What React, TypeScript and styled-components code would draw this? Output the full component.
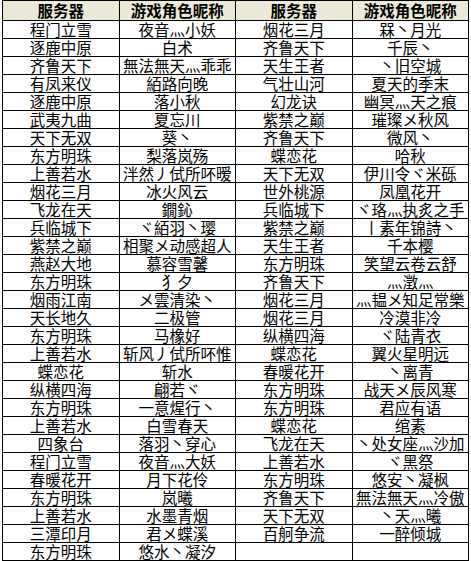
import styled, { createGlobalStyle } from "styled-components";

const GlobalStyle = createGlobalStyle`
  html, body {
    margin: 0;
    padding: 0;
    background: #fff;
  }
  body {
    font-family: "Noto Sans CJK SC", "Noto Sans", sans-serif;
    color: #000;
  }
`;

const Page = styled.div`
  padding: 0 0 0 2px;
`;

const Table = styled.table`
  width: 467px;
  border-collapse: collapse;
  table-layout: fixed;
`;

const HeadCell = styled.th`
  height: 19px;
  padding: 0;
  border: 1px solid #000;
  background: #ece9d8;
  font-size: 15.5px;
  font-weight: 700;
  line-height: 19px;
  text-align: center;
  vertical-align: middle;
  white-space: nowrap;
`;

const Cell = styled.td`
  height: 17px;
  padding: 0;
  border: 1px solid #000;
  font-size: 15.5px;
  line-height: 17px;
  text-align: center;
  vertical-align: middle;
  white-space: nowrap;
`;

const rows: [string, string, string, string][] = [
  ["程门立雪", "夜音灬小妖", "烟花三月", "槑丶月光"],
  ["逐鹿中原", "白术", "齐鲁天下", "千辰丶"],
  ["齐鲁天下", "無法無天灬乖乖", "天生王者", "丶旧空城"],
  ["有凤来仪", "絔路向晚", "气壮山河", "夏天的季末"],
  ["逐鹿中原", "落小秋", "幻龙诀", "幽冥灬天之痕"],
  ["武夷九曲", "夏忘川", "紫禁之巅", "璀璨メ秋风"],
  ["天下无双", "葵丶", "齐鲁天下", "微风丶"],
  ["东方明珠", "梨落岚殇", "蝶恋花", "哈秋"],
  ["上善若水", "泮然丿侙所吥暧", "天下无双", "伊川令ヾ米砾"],
  ["烟花三月", "冰火风云", "世外桃源", "凤凰花开"],
  ["飞龙在天", "鐗鈊", "兵临城下", "ヾ珞灬执炙之手"],
  ["兵临城下", "ヾ絔羽丶璎", "紫禁之巅", "丨素年锦詩丶"],
  ["紫禁之巅", "相聚メ动感超人", "天生王者", "千本樱"],
  ["燕赵大地", "慕容雪馨", "东方明珠", "笑望云卷云舒"],
  ["东方明珠", "犭夕", "齐鲁天下", "灬澂灬"],
  ["烟雨江南", "メ雲清染丶", "烟花三月", "灬韫メ知足常樂"],
  ["天长地久", "二极管", "烟花三月", "冷漠非冷"],
  ["东方明珠", "马橡好", "纵横四海", "ヾ陆青衣"],
  ["上善若水", "斩风丿侙所吥惟", "蝶恋花", "翼火星明远"],
  ["蝶恋花", "斩水", "春暖花开", "丶离青"],
  ["纵横四海", "翩若ヾ", "东方明珠", "战天メ辰风寒"],
  ["东方明珠", "一意煋行丶", "东方明珠", "君应有语"],
  ["上善若水", "白雪春天", "蝶恋花", "绾素"],
  ["四象台", "落羽丶穿心", "飞龙在天", "丶处女座灬沙加"],
  ["程门立雪", "夜音灬大妖", "上善若水", "ヾ黑祭"],
  ["春暖花开", "月下花伶", "东方明珠", "悠安丶凝枫"],
  ["东方明珠", "岚曦", "齐鲁天下", "無法無天灬冷傲"],
  ["上善若水", "水墨青烟", "天下无双", "丶天灬曦"],
  ["三潭印月", "君メ蝶溪", "百舸争流", "一醉倾城"],
  ["东方明珠", "悠水丶凝汐", "", ""],
];

const headers = ["服务器", "游戏角色昵称", "服务器", "游戏角色昵称"];

export default function App() {
  return (
    <>
      <GlobalStyle />
      <Page>
        <Table>
          <thead>
            <tr>
              {headers.map((h, i) => (
                <HeadCell key={i}>{h}</HeadCell>
              ))}
            </tr>
          </thead>
          <tbody>
            {rows.map((r, i) => (
              <tr key={i}>
                {r.map((c, j) => (
                  <Cell key={j}>{c}</Cell>
                ))}
              </tr>
            ))}
          </tbody>
        </Table>
      </Page>
    </>
  );
}
